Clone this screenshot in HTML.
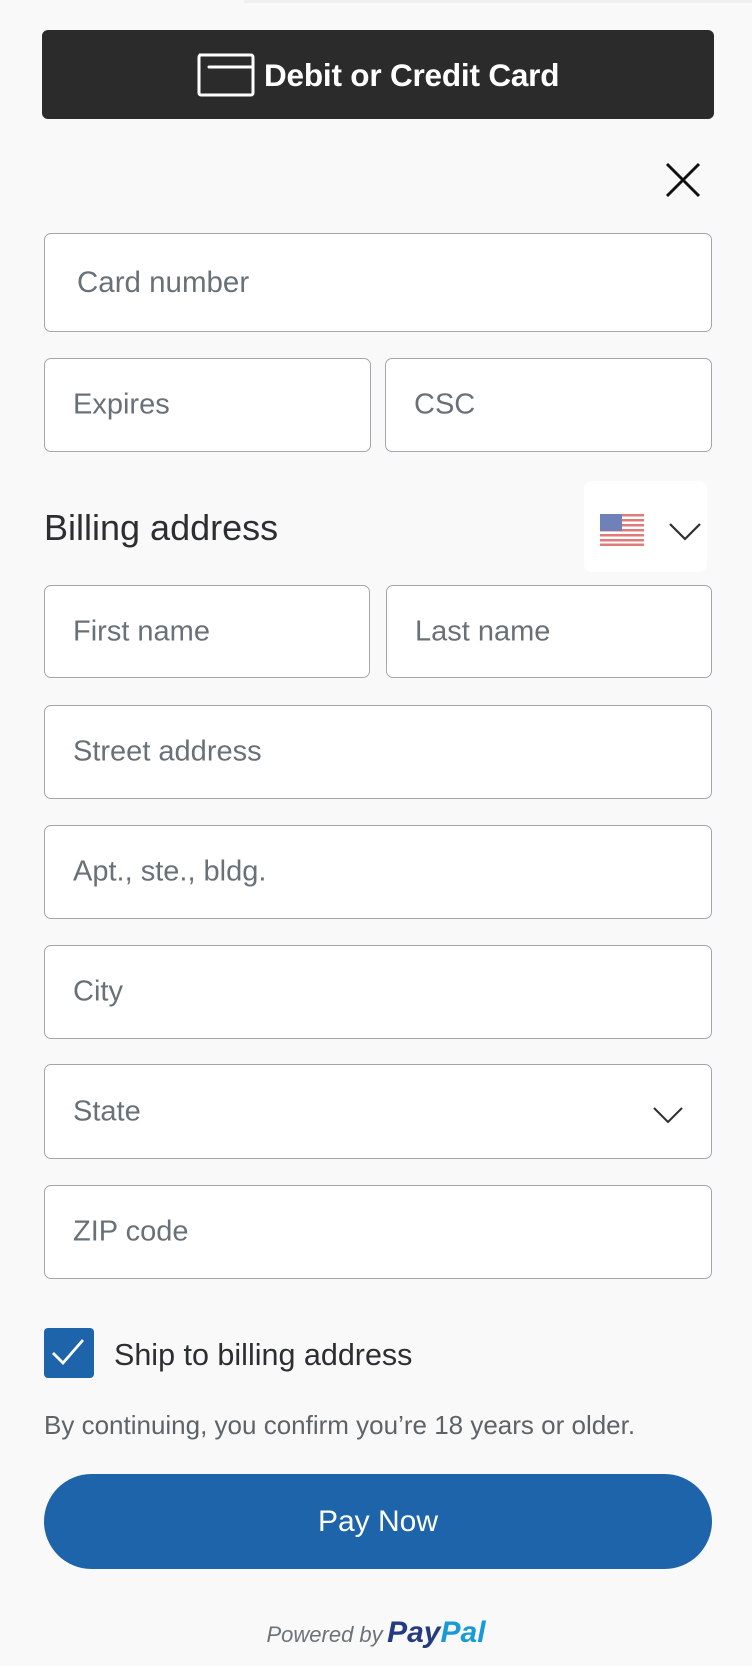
<!DOCTYPE html>
<html><head><meta charset="utf-8"><style>
body{margin:0;width:752px;height:1666px;background:#f9f9f9;position:relative;overflow:hidden;font-family:"Liberation Sans",Arial,sans-serif}
.a{position:absolute}
.in{position:absolute;box-sizing:border-box;background:#fff;border:1.5px solid #a3a7ab;border-radius:7px}
.ph{position:absolute;left:28px;top:50%;transform:translateY(-50%);font-size:29px;color:#687177;white-space:nowrap}
</style></head><body>
<div class="a" style="left:244px;top:0;width:508px;height:3px;background:#f0f0f0"></div>
<div class="a" style="left:42px;top:30px;width:672px;height:89px;background:#2a2b2a;border-radius:6px"></div>
<svg class="a" style="left:196px;top:52px" width="60" height="46" viewBox="0 0 60 46"><path d="M3 3 H55 a2 2 0 0 1 2 2 V41 a2 2 0 0 1 -2 2 H5 a2 2 0 0 1 -2 -2 V5 a2 2 0 0 1 2 -2 Z M13 15 H57" fill="none" stroke="#fff" stroke-width="3" stroke-linecap="round"/></svg>
<div class="a" style="left:264px;top:55px;font-size:31.5px;font-weight:bold;color:#fff;line-height:40px;letter-spacing:-0.2px">Debit or Credit Card</div>
<svg class="a" style="left:665px;top:162px" width="36" height="36" viewBox="0 0 36 36"><path d="M2 2 L34 34 M34 2 L2 34" stroke="#111" stroke-width="3"/></svg>

<div class="in" style="left:44px;top:233px;width:668px;height:99px"><span class="ph" style="left:32px;font-size:29.5px">Card number</span></div>
<div class="in" style="left:44px;top:358px;width:327px;height:94px"><span class="ph">Expires</span></div>
<div class="in" style="left:385px;top:358px;width:327px;height:94px"><span class="ph">CSC</span></div>

<div class="a" style="left:44px;top:508px;font-size:36px;color:#2c2e2f;line-height:40px">Billing address</div>
<div class="a" style="left:584px;top:481px;width:123px;height:91px;background:#fff;border-radius:8px"></div>
<svg class="a" style="left:600px;top:514px" width="44" height="32" viewBox="0 0 44 32">
<g fill="#e07b7b"><rect y="0" width="44" height="2.5"/><rect y="5" width="44" height="2.5"/><rect y="10" width="44" height="2.5"/><rect y="15" width="44" height="2.5"/><rect y="20" width="44" height="2.5"/><rect y="25" width="44" height="2.5"/><rect y="29.5" width="44" height="2.5"/></g>
<rect x="0" y="0" width="22" height="17" fill="#7080b8"/></svg>
<svg class="a" style="left:668px;top:522px" width="34" height="20" viewBox="0 0 34 20"><path d="M2 2 L17 17 L32 2" fill="none" stroke="#2c2e2f" stroke-width="2.2"/></svg>

<div class="in" style="left:44px;top:585px;width:326px;height:93px"><span class="ph">First name</span></div>
<div class="in" style="left:386px;top:585px;width:326px;height:93px"><span class="ph">Last name</span></div>
<div class="in" style="left:44px;top:705px;width:668px;height:94px"><span class="ph">Street address</span></div>
<div class="in" style="left:44px;top:825px;width:668px;height:94px"><span class="ph">Apt., ste., bldg.</span></div>
<div class="in" style="left:44px;top:945px;width:668px;height:94px"><span class="ph">City</span></div>
<div class="in" style="left:44px;top:1064px;width:668px;height:95px"><span class="ph">State</span>
<svg class="a" style="left:606px;top:40px" width="34" height="20" viewBox="0 0 34 20"><path d="M3 3 L17 17 L31 3" fill="none" stroke="#2c2e2f" stroke-width="2"/></svg></div>
<div class="in" style="left:44px;top:1185px;width:668px;height:94px"><span class="ph">ZIP code</span></div>

<div class="a" style="left:44px;top:1328px;width:50px;height:50px;background:#1e64ab;border-radius:4px"></div>
<svg class="a" style="left:44px;top:1328px" width="50" height="50" viewBox="0 0 50 50"><path d="M9 25 L19 35 L39 12" fill="none" stroke="#fff" stroke-width="2.8"/></svg>
<div class="a" style="left:114px;top:1336px;font-size:30.5px;color:#2c2e2f;line-height:38px">Ship to billing address</div>
<div class="a" style="left:44px;top:1409px;font-size:26px;color:#5e6368;line-height:32px">By continuing, you confirm you’re 18 years or older.</div>

<div class="a" style="left:44px;top:1474px;width:668px;height:95px;background:#1e64ab;border-radius:48px;color:#fff;font-size:30px;text-align:center;line-height:95px">Pay Now</div>

<div class="a" style="left:0;width:752px;top:1614px;text-align:center;line-height:38px;white-space:nowrap">
<span style="font-size:22px;font-style:italic;color:#6c7378">Powered by</span>
<span style="font-size:30px;font-style:italic;font-weight:bold;color:#253b80">Pay</span><span style="font-size:30px;font-style:italic;font-weight:bold;color:#179bd7">Pal</span></div>
</body></html>
